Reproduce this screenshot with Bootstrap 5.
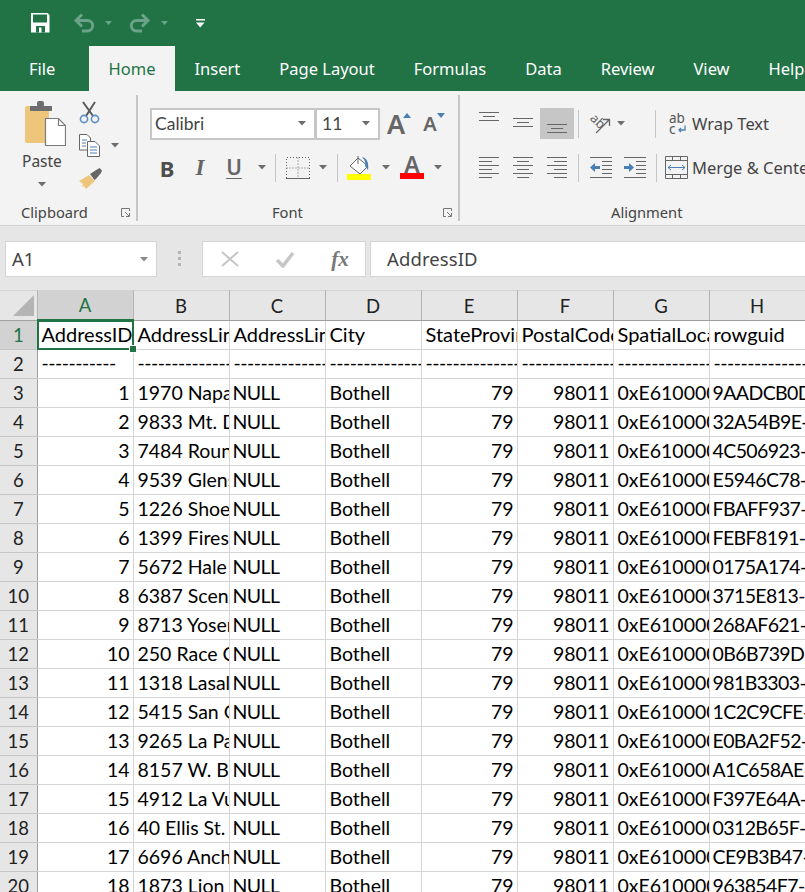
<!DOCTYPE html>
<html lang="en"><head><meta charset="utf-8"><title>Excel</title>
<link href="https://cdn.jsdelivr.net/npm/bootstrap@5.3.0/dist/css/bootstrap.min.css" rel="stylesheet">
<style>
html,body{margin:0;height:892px;overflow:hidden;background:#fff}
body{width:805px;font-family:"Noto Sans","Open Sans",sans-serif;color:#444}
svg{display:block;flex:none}
.titlebar{height:46px;background:#217346;padding-left:30px}
.tt1{margin-left:23px}.tt2{margin-left:9px}.tt3{margin-left:15px}.tt4{margin-left:9px}.tt5{margin-left:26px}
.tabs{height:45px;background:#217346;flex-wrap:nowrap;white-space:nowrap;overflow:hidden}
.tabs .nav-link{flex:none;color:#fff;font-size:16.5px;line-height:45px;padding:0 19.5px;height:45px;border-radius:0}
.tabs .nav-link:first-child{padding:0 0 0 29px;width:89px}
.tabs .nav-link.active{background:#f3f3f3;color:#217346;padding:0;width:86px;text-align:center}
.ribbon{height:135px;background:#f3f3f3;border-bottom:1px solid #d4d4d4;overflow:hidden}
.grp{height:126px;margin-top:4px;border-right:2px solid #c6c6c6;flex:none;display:flex;flex-direction:column}
.g1{width:138px}.g2{width:322px;padding-top:13px}.g3{width:345px;padding-top:13px;border:0}
.glab{height:17px;margin-top:auto;font-size:14.7px;line-height:17px;display:flex;align-items:center;white-space:nowrap}
.g1 .glab{padding-left:21px}.g2 .glab{padding-left:134px}.g3 .glab{padding-left:151px}
.launch{margin-left:auto;margin-right:6px}
.rw{height:31px;display:flex;align-items:center;flex:none}
.rw+.rw{margin-top:13px}
.c{display:flex;align-items:center;justify-content:center;height:31px;flex:none}
.sep{width:1px;height:28px;background:#c6c6c6;flex:none}
.paste{margin-left:25px;width:42px;padding-top:6px}
.paste span{display:block;font-size:15.5px;line-height:20px;margin:5px 0 0 -3px}
.paste svg.ar{margin:11px 0 0 13px}
.tools{margin-left:12px;padding-top:6px}
.tool-copy{margin-top:10px}.tool-brush{margin-top:11px}.copy-ar{margin-left:11px}
.combo{height:32px;background:#fff;border:2px solid #c6c6c6;font-family:Lato,sans-serif;font-size:17.5px;line-height:28px;padding-left:3px;color:#444}
.c-font{width:166px;margin-left:12px}.c-size{width:64px;border-left-width:1px;padding-left:5px}
.bi{line-height:1;color:#4d4d4d}
.b1{font-family:"Noto Sans",sans-serif;font-weight:700;font-size:22px}
.b2{font-family:"Liberation Serif",serif;font-style:italic;font-weight:700;font-size:23px;color:#666}
.b3{font-family:"Noto Sans",sans-serif;font-weight:600;font-size:21px;color:#666;text-decoration:underline;text-decoration-thickness:1px;text-underline-offset:3px}
.bigA{font-family:"Noto Sans",sans-serif;font-size:27px;line-height:1;color:#666;font-weight:600}
.smA{font-size:20px}
.fontA{font-size:23px;line-height:17px}
.growA{width:34px;position:relative}
.tri{position:absolute;right:2px;top:5px}
.w1{margin-left:-1px}
.wtxt{font-size:16.5px;line-height:31px;white-space:nowrap;color:#444}
.wtxt-w{margin-left:5px}
.sepw{margin:0 13px 0 29px}
.sepm{margin:0 10px 0 4px}
.mrg{margin:0 4px 0 -2px}
.fbar{height:64px;background:#e6e6e6;padding:15px 0 13px 5px}
.box{height:36px;background:#fff;border:1px solid #d4d4d4;flex:none}
.namebox{width:152px;padding-left:6px;font-size:18.5px;line-height:34px;color:#444}
.dots{width:45px}
.fx{width:164px;margin-right:4px}
.input{flex:1;border-right:0;padding-left:16px;font-size:18.5px;line-height:34px;letter-spacing:.1px}
.fxt{font-family:"Liberation Serif",serif;font-style:italic;font-weight:700;font-size:21px;line-height:1;color:#777}
.sheet{table-layout:fixed;width:805px;margin:0;border-collapse:collapse;font-family:Lato,sans-serif;color:#000;--bs-table-border-color:#d4d4d4}
.sheet>:not(caption)>*>*{padding:0 3px 0 4px;height:29px;line-height:28px;font-size:19.5px;white-space:nowrap;overflow:hidden;color:#000;border:1px solid #d4d4d4;box-shadow:none;background:#fff}
.sheet>thead>tr>th{height:28px;background:#e6e6e6;text-align:center;font-weight:400;font-size:18.5px;color:#222;border:1px solid #b4b4b4;border-width:0 1px 1px 0;border-bottom-color:#9f9f9f;padding:0}
.sheet>thead>tr>th.on{background:#d2d2d2;color:#217346;border-bottom:2px solid #217346}
.sheet>thead>tr>th.corner{position:relative}
.sheet>tbody>tr>th{background:#e6e6e6;text-align:center;font-weight:400;font-size:18.5px;color:#222;padding:0;border:1px solid #c6c6c6;border-width:0 1px 1px 0;border-right-color:#9f9f9f}
.sheet>tbody>tr>th.on{background:#d2d2d2;color:#217346}
.sheet>tbody>tr.hdr>td{font-size:20px;line-height:26px}
.sheet>tbody>tr.dash>td{letter-spacing:-.5px;line-height:26px}
.sheet>tbody>tr>td.num{text-align:right;padding-right:3px}
.sheet>tbody>tr>td.nl{padding-left:3px;letter-spacing:-.6px}
.sheet>tbody>tr>td.hx{letter-spacing:-.6px;padding-left:3px}
.sheet>tbody>tr>td.sel{position:relative;overflow:visible}
.selbox{position:absolute;left:-1px;top:-1px;right:-1px;bottom:-1px;border:2px solid #217346;pointer-events:none}
.handle{position:absolute;right:-4px;bottom:-4px;width:6px;height:6px;background:#217346;border:1px solid #fff;box-sizing:content-box}
.cornertri{position:absolute;left:13px;top:4px}
</style></head>
<body>
<div class="titlebar d-flex align-items-center">
<svg width="20" height="20" viewBox="0 0 20 20"><path fill="#fff" d="M1 0H17.500L19.500 2V19.500H1Z"/><rect x="3" y="1.500" width="14" height="8" fill="#217346"/><rect x="6" y="13" width="9" height="6.500" fill="#217346"/><rect x="9" y="14.500" width="2.500" height="5" fill="#fff"/></svg>
<svg class="tt1" width="22" height="20" viewBox="0 0 22 20" fill="none" stroke="#6ba288" stroke-width="3"><path d="M9 1.500L3 7.500 9 13.500M3 7.500H14.500a5.200 5.200 0 0 1 0 10.400H9"/></svg>
<svg class="tt2" width="10" height="5" viewBox="0 0 10 5"><path fill="#6ba288" d="M1 0H8L4.500 4Z"/></svg>
<svg class="tt3" width="22" height="20" viewBox="0 0 22 20" fill="none" stroke="#6ba288" stroke-width="3"><path d="M13 1.500L19 7.500 13 13.500M19 7.500H7.500a5.200 5.200 0 0 0 0 10.400H13"/></svg>
<svg class="tt4" width="10" height="5" viewBox="0 0 10 5"><path fill="#6ba288" d="M1 0H8L4.500 4Z"/></svg>
<svg class="tt5" width="9" height="9" viewBox="0 0 9 9"><rect width="9" height="1.500" fill="#fff"/><path fill="#fff" d="M0 3.500H8.500L4.200 8.500Z"/></svg>
</div>
<nav class="nav tabs">
<a class="nav-link" href="#">File</a>
<a class="nav-link active" href="#">Home</a>
<a class="nav-link" href="#">Insert</a>
<a class="nav-link" href="#">Page Layout</a>
<a class="nav-link" href="#">Formulas</a>
<a class="nav-link" href="#">Data</a>
<a class="nav-link" href="#">Review</a>
<a class="nav-link" href="#">View</a>
<a class="nav-link" href="#">Help</a>
</nav>
<div class="ribbon d-flex">
 <div class="grp g1">
  <div class="d-flex">
   <div class="paste">
    <svg width="41" height="45" viewBox="0 0 41 45"><rect x="0" y="5" width="24" height="37" rx="2" fill="#edc67c"/><rect x="5" y="5" width="22" height="5" fill="#6e6e6e"/><rect x="12" y="0" width="7" height="6" rx="2" fill="#6e6e6e"/><path fill="#fff" stroke="#7a7a7a" stroke-width="1.200" d="M20.500 17.500H33.500L40.500 24.500V44.500H20.500Z"/><path fill="none" stroke="#7a7a7a" stroke-width="1.200" d="M33.500 17.500V24.500H40.500"/></svg>
    <span>Paste</span>
    <svg class="ar" width="8" height="5" viewBox="0 0 8 5"><path fill="#6d6d6d" d="M0 0H8L4 4.500Z"/></svg>
   </div>
   <div class="tools">
    <svg width="22" height="23" viewBox="0 0 22 23" fill="none"><path stroke="#5a5a5a" stroke-width="2" d="M4 1L14 15M16 1L7 15"/><circle cx="5" cy="18" r="3.600" stroke="#5b8fc4" stroke-width="1.600"/><circle cx="16" cy="18" r="3.600" stroke="#5b8fc4" stroke-width="1.600"/></svg>
    <div class="d-flex align-items-center tool-copy">
     <svg width="21" height="23" viewBox="0 0 21 23"><path fill="#fff" stroke="#666" d="M.5.5H8L11.500 4V16H.5Z"/><path fill="#fff" stroke="#666" d="M8.500 7.500H16L20.500 12V22.500H8.500Z"/><path stroke="#4a7fb5" d="M3 6H8M3 9H7M3 12H7M11 13H18M11 16H18M11 19H18"/></svg>
     <svg class="copy-ar" width="8" height="5" viewBox="0 0 8 5"><path fill="#6d6d6d" d="M0 0H8L4 4.500Z"/></svg>
    </div>
    <svg class="tool-brush" width="24" height="21" viewBox="0 0 24 21"><path fill="#edc67c" d="M0 13L10 7 16 13 7 21 5 18 3 19 4 16Z"/><path fill="#666" d="M11 6L18 1.500 20.500 0 23 2.500 22 5 17 11 15.500 12Z"/></svg>
   </div>
  </div>
  <div class="glab"><span>Clipboard</span><svg class="launch" width="9" height="9" viewBox="0 0 9 9" fill="none" stroke="#777"><path d="M8.500 3V.5H.5V8.500H3"/><path d="M4 4L8 8M5 8.500H8.500V5"/></svg></div>
 </div>
 <div class="grp g2">
  <div class="rw">
   <div class="combo c-font d-flex justify-content-between align-items-center">Calibri<svg class="me-2" width="8" height="5" viewBox="0 0 8 5"><path fill="#6d6d6d" d="M0 0H8L4 4.500Z"/></svg></div>
   <div class="combo c-size d-flex justify-content-between align-items-center">11<svg class="me-2" width="8" height="5" viewBox="0 0 8 5"><path fill="#6d6d6d" d="M0 0H8L4 4.500Z"/></svg></div>
   <div class="c growA w1"><span class="bigA">A</span><svg class="tri" width="8" height="5" viewBox="0 0 8 5"><path fill="#4a7fb5" d="M4 0L8 5H0Z"/></svg></div>
   <div class="c growA"><span class="bigA smA">A</span><svg class="tri" width="8" height="5" viewBox="0 0 8 5"><path fill="#4a7fb5" d="M0 0H8L4 5Z"/></svg></div>
  </div>
  <div class="rw">
   <div class="c" style="width:34px;margin-left:12px"><span class="bi b1">B</span></div>
   <div class="c" style="width:32px"><span class="bi b2">I</span></div>
   <div class="c" style="width:36px"><span class="bi b3">U</span></div>
   <div class="c" style="width:20px"><svg width="8" height="5" viewBox="0 0 8 5"><path fill="#6d6d6d" d="M0 0H8L4 4.500Z"/></svg></div>
   <div class="sep" style="margin:0 10px 0 3px"></div>
   <svg width="24" height="22" viewBox="0 0 24 22" fill="none" stroke="#666"><path stroke-dasharray="1 2" d="M.5 21V.5H23.500V21M12 .5V21M.5 11H23.500"/><path d="M0 21.500H24"/></svg>
   <div class="c" style="width:26px"><svg width="8" height="5" viewBox="0 0 8 5"><path fill="#6d6d6d" d="M0 0H8L4 4.500Z"/></svg></div>
   <div class="sep" style="margin:0 9px 0 1px"></div>
   <svg width="24" height="24" viewBox="0 0 24 24"><path fill="#fff" stroke="#666" d="M11 2L21 10 13 18 3 10Z"/><path fill="none" stroke="#666" d="M11 0V8"/><path fill="#4a7fb5" d="M15 1C20 2 22 7 21 14L18 10C19 7 18 4 15 1Z"/><rect y="18" width="24" height="6" fill="#ffff00"/></svg>
   <div class="c" style="width:29px"><svg width="8" height="5" viewBox="0 0 8 5"><path fill="#6d6d6d" d="M0 0H8L4 4.500Z"/></svg></div>
   <div class="d-flex flex-column align-items-center" style="width:24px"><span class="bigA fontA">A</span><svg width="24" height="6" viewBox="0 0 24 6"><rect width="24" height="6" fill="#ff0000"/></svg></div>
   <div class="c" style="width:28px"><svg width="8" height="5" viewBox="0 0 8 5"><path fill="#6d6d6d" d="M0 0H8L4 4.500Z"/></svg></div>
  </div>
  <div class="glab"><span>Font</span><svg class="launch" width="9" height="9" viewBox="0 0 9 9" fill="none" stroke="#777"><path d="M8.500 3V.5H.5V8.500H3"/><path d="M4 4L8 8M5 8.500H8.500V5"/></svg></div>
 </div>
 <div class="grp g3">
  <div class="rw" style="margin-left:12px">
   <div class="c" style="width:34px"><svg width="20" height="31" viewBox="0 0 20 31" stroke="#666"><path d="M0 4.500H20M4 8.500H16M0 12.500H20"/></svg></div>
   <div class="c" style="width:34px"><svg width="20" height="31" viewBox="0 0 20 31" stroke="#666"><path d="M0 10.500H20M4 14.500H16M0 18.500H20"/></svg></div>
   <div class="c" style="width:34px;background:#c6c6c6"><svg width="20" height="31" viewBox="0 0 20 31" stroke="#666"><path d="M0 16.500H20M4 20.500H16M0 24.500H20"/></svg></div>
   <div class="sep" style="margin:0 4px"></div>
   <div class="c" style="width:33px"><svg width="22" height="22" viewBox="0 0 22 22"><text transform="rotate(45 8 8)" x="1" y="12" font-family="Noto Sans,sans-serif" font-size="13" fill="#666">ab</text><path fill="none" stroke="#666" stroke-width="1.300" d="M7 20L20 7M14 6.500H20.500V13"/></svg></div>
   <div class="c" style="width:10px"><svg width="8" height="5" viewBox="0 0 8 5"><path fill="#6d6d6d" d="M0 0H8L4 4.500Z"/></svg></div>
   <div class="sep sepw"></div>
   <svg width="18" height="22" viewBox="0 0 18 22"><text x="0" y="10" font-family="Noto Sans,sans-serif" font-size="13.500" fill="#555">ab</text><text x="0" y="21" font-family="Noto Sans,sans-serif" font-size="13.500" fill="#555">c</text><path fill="none" stroke="#4a7fb5" stroke-width="1.300" d="M16 12.500V17H10M12 15L10 17 12 19"/></svg>
   <span class="wtxt wtxt-w">Wrap Text</span>
  </div>
  <div class="rw" style="margin-left:12px">
   <div class="c" style="width:34px"><svg width="20" height="22" viewBox="0 0 20 22" stroke="#666"><path d="M0 .5H20M0 4.500H13M0 8.500H20M0 12.500H13M0 16.500H20M0 20.500H13"/></svg></div>
   <div class="c" style="width:34px"><svg width="20" height="22" viewBox="0 0 20 22" stroke="#666"><path d="M0 .5H20M4 4.500H16M0 8.500H20M4 12.500H16M0 16.500H20M4 20.500H16"/></svg></div>
   <div class="c" style="width:34px"><svg width="20" height="22" viewBox="0 0 20 22" stroke="#666"><path d="M0 .5H20M7 4.500H20M0 8.500H20M7 12.500H20M0 16.500H20M7 20.500H20"/></svg></div>
   <div class="sep" style="margin:0 4px"></div>
   <div class="c" style="width:35px"><svg width="22" height="22" viewBox="0 0 22 22"><path stroke="#666" d="M0 .5H22M12 4.500H22M12 8.500H22M12 12.500H22M12 16.500H22M0 20.500H22"/><path fill="#4a7fb5" d="M0 10.500L5 6V9H10V12H5V15Z"/></svg></div>
   <div class="c" style="width:34px"><svg width="22" height="22" viewBox="0 0 22 22"><path stroke="#666" d="M0 .5H22M12 4.500H22M12 8.500H22M12 12.500H22M12 16.500H22M0 20.500H22"/><path fill="#4a7fb5" d="M10 10.500L5 6V9H0V12H5V15Z"/></svg></div>
   <div class="sep sepm"></div>
   <svg class="mrg" width="23" height="23" viewBox="0 0 23 23" fill="none"><path stroke="#666" d="M.5.5H22.500V22.500H.5ZM.5 4.500H22.500M.5 18.500H22.500M7.500.5V4.500M15.500.5V4.500M7.500 18.500V22.500M15.500 18.500V22.500"/><path stroke="#4a7fb5" d="M3 11.500H20M6 9L3 11.500 6 14M17 9L20 11.500 17 14"/></svg>
   <span class="wtxt">Merge &amp; Center</span>
  </div>
  <div class="glab"><span>Alignment</span></div>
 </div>
</div>
<div class="fbar d-flex">
 <div class="box namebox d-flex justify-content-between align-items-center">A1<svg class="me-2" width="8" height="5" viewBox="0 0 8 5"><path fill="#888" d="M0 0H8L4 4.500Z"/></svg></div>
 <div class="dots d-flex justify-content-center align-items-center"><svg width="3" height="16" viewBox="0 0 3 16" fill="#b4b4b4"><rect width="3" height="3"/><rect y="6" width="3" height="3"/><rect y="12" width="3" height="3"/></svg></div>
 <div class="box fx d-flex align-items-center">
  <div class="c" style="width:54px"><svg width="18" height="16" viewBox="0 0 18 16" fill="none" stroke="#c6c6c6" stroke-width="2"><path d="M1 1L17 15M17 1L1 15"/></svg></div>
  <div class="c" style="width:56px"><svg width="20" height="17" viewBox="0 0 20 17" fill="none" stroke="#c6c6c6" stroke-width="3.500"><path d="M2 9L8 15 18 2"/></svg></div>
  <div class="c" style="width:54px"><span class="fxt">fx</span></div>
 </div>
 <div class="box input">AddressID</div>
</div>
<table class="table table-bordered sheet">
<colgroup><col style="width:37px"><col style="width:96px"><col style="width:96px"><col style="width:96px"><col style="width:96px"><col style="width:96px"><col style="width:96px"><col style="width:96px"><col style="width:96px"></colgroup>
<thead><tr><th class="corner"><svg class="cornertri" width="21" height="21" viewBox="0 0 21 21"><path fill="#b4b4b4" d="M21 0V21H0Z"/></svg></th><th class="on">A</th><th>B</th><th>C</th><th>D</th><th>E</th><th>F</th><th>G</th><th>H</th></tr></thead>
<tbody>
<tr class="hdr"><th class="on">1</th><td class="sel">AddressID<span class="selbox"></span><span class="handle"></span></td><td>AddressLine1</td><td>AddressLine2</td><td>City</td><td>StateProvinceID</td><td>PostalCode</td><td>SpatialLocation</td><td>rowguid</td></tr>
<tr class="dash"><th>2</th><td>-----------</td><td>--------------</td><td>--------------</td><td>--------------</td><td>--------------</td><td>--------------</td><td>--------------</td><td>--------------</td></tr>
<tr><th>3</th><td class="num">1</td><td>1970 Napa Ct.</td><td class="nl">NULL</td><td>Bothell</td><td class="num">79</td><td class="num">98011</td><td>0xE61000010</td><td class="hx">9AADCB0D-</td></tr>
<tr><th>4</th><td class="num">2</td><td>9833 Mt. Dias</td><td class="nl">NULL</td><td>Bothell</td><td class="num">79</td><td class="num">98011</td><td>0xE61000010</td><td class="hx">32A54B9E-</td></tr>
<tr><th>5</th><td class="num">3</td><td>7484 Roundtree</td><td class="nl">NULL</td><td>Bothell</td><td class="num">79</td><td class="num">98011</td><td>0xE61000010</td><td class="hx">4C506923-</td></tr>
<tr><th>6</th><td class="num">4</td><td>9539 Glenside</td><td class="nl">NULL</td><td>Bothell</td><td class="num">79</td><td class="num">98011</td><td>0xE61000010</td><td class="hx">E5946C78-</td></tr>
<tr><th>7</th><td class="num">5</td><td>1226 Shoe St.</td><td class="nl">NULL</td><td>Bothell</td><td class="num">79</td><td class="num">98011</td><td>0xE61000010</td><td class="hx">FBAFF937-</td></tr>
<tr><th>8</th><td class="num">6</td><td>1399 Firestone</td><td class="nl">NULL</td><td>Bothell</td><td class="num">79</td><td class="num">98011</td><td>0xE61000010</td><td class="hx">FEBF8191-</td></tr>
<tr><th>9</th><td class="num">7</td><td>5672 Hale Dr.</td><td class="nl">NULL</td><td>Bothell</td><td class="num">79</td><td class="num">98011</td><td>0xE61000010</td><td class="hx">0175A174-</td></tr>
<tr><th>10</th><td class="num">8</td><td>6387 Scenic</td><td class="nl">NULL</td><td>Bothell</td><td class="num">79</td><td class="num">98011</td><td>0xE61000010</td><td class="hx">3715E813-</td></tr>
<tr><th>11</th><td class="num">9</td><td>8713 Yosemite</td><td class="nl">NULL</td><td>Bothell</td><td class="num">79</td><td class="num">98011</td><td>0xE61000010</td><td class="hx">268AF621-</td></tr>
<tr><th>12</th><td class="num">10</td><td>250 Race Court</td><td class="nl">NULL</td><td>Bothell</td><td class="num">79</td><td class="num">98011</td><td>0xE61000010</td><td class="hx">0B6B739D-</td></tr>
<tr><th>13</th><td class="num">11</td><td>1318 Lasalle</td><td class="nl">NULL</td><td>Bothell</td><td class="num">79</td><td class="num">98011</td><td>0xE61000010</td><td class="hx">981B3303-</td></tr>
<tr><th>14</th><td class="num">12</td><td>5415 San Gabriel</td><td class="nl">NULL</td><td>Bothell</td><td class="num">79</td><td class="num">98011</td><td>0xE61000010</td><td class="hx">1C2C9CFE-</td></tr>
<tr><th>15</th><td class="num">13</td><td>9265 La Paz</td><td class="nl">NULL</td><td>Bothell</td><td class="num">79</td><td class="num">98011</td><td>0xE61000010</td><td class="hx">E0BA2F52-</td></tr>
<tr><th>16</th><td class="num">14</td><td>8157 W. Book</td><td class="nl">NULL</td><td>Bothell</td><td class="num">79</td><td class="num">98011</td><td>0xE61000010</td><td class="hx">A1C658AE-</td></tr>
<tr><th>17</th><td class="num">15</td><td>4912 La Vuelta</td><td class="nl">NULL</td><td>Bothell</td><td class="num">79</td><td class="num">98011</td><td>0xE61000010</td><td class="hx">F397E64A-</td></tr>
<tr><th>18</th><td class="num">16</td><td>40 Ellis St.</td><td class="nl">NULL</td><td>Bothell</td><td class="num">79</td><td class="num">98011</td><td>0xE61000010</td><td class="hx">0312B65F-</td></tr>
<tr><th>19</th><td class="num">17</td><td>6696 Anchor</td><td class="nl">NULL</td><td>Bothell</td><td class="num">79</td><td class="num">98011</td><td>0xE61000010</td><td class="hx">CE9B3B47-</td></tr>
<tr><th>20</th><td class="num">18</td><td>1873 Lion Circle</td><td class="nl">NULL</td><td>Bothell</td><td class="num">79</td><td class="num">98011</td><td>0xE61000010</td><td class="hx">963854F7-</td></tr>
</tbody></table>
<script src="https://cdn.jsdelivr.net/npm/bootstrap@5.3.0/dist/js/bootstrap.bundle.min.js"></script>
</body></html>
